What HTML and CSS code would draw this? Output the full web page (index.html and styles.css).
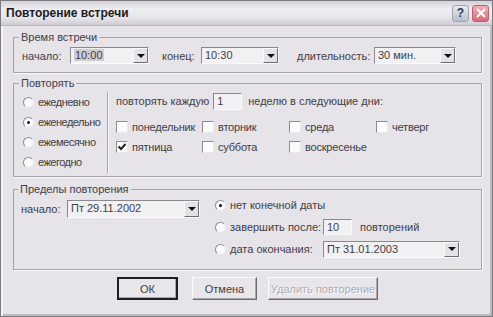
FILE: index.html
```html
<!DOCTYPE html>
<html lang="ru">
<head>
    <meta charset="UTF-8">
    <title>Повторение встречи</title>
    <link rel="stylesheet" href="styles.css">
</head>
<body>
    <div class="window">
        <div class="titlebar">
            <span class="title">Повторение встречи</span>
            <div class="title-buttons">
                <span class="tbtn help">?</span>
                <span class="tbtn close">
                    <svg width="10" height="10" viewBox="0 0 10 10"><path d="M1 1 L9 9 M9 1 L1 9" stroke="#fff" stroke-width="2"/></svg>
                </span>
            </div>
        </div>

        <div class="content">
            <!-- время встречи -->
            <fieldset class="group group-time">
                <legend>Время встречи</legend>
                <span class="lbl lbl-start">начало:</span>
                <div class="combo combo-start"><span class="value"><span class="sel">10:00</span></span><span class="drop"></span></div>
                <span class="lbl lbl-end">конец:</span>
                <div class="combo combo-end"><span class="value">10:30</span><span class="drop"></span></div>
                <span class="lbl lbl-dur">длительность:</span>
                <div class="combo combo-dur"><span class="value">30 мин.</span><span class="drop"></span></div>
            </fieldset>

            <!-- повторять -->
            <fieldset class="group group-repeat">
                <legend>Повторять</legend>
                <div class="kinds">
                    <div class="opt"><span class="radio"></span>ежедневно</div>
                    <div class="opt"><span class="radio on"></span>еженедельно</div>
                    <div class="opt"><span class="radio"></span>ежемесячно</div>
                    <div class="opt"><span class="radio"></span>ежегодно</div>
                </div>
                <div class="weekly">
                    <div class="every">
                        <span>повторять каждую</span>
                        <span class="edit edit-weeks">1</span>
                        <span>неделю в следующие дни:</span>
                    </div>
                    <div class="days">
                        <div class="opt"><span class="check"></span>понедельник</div>
                        <div class="opt"><span class="check"></span>вторник</div>
                        <div class="opt"><span class="check"></span>среда</div>
                        <div class="opt"><span class="check"></span>четверг</div>
                        <div class="opt"><span class="check on"><svg width="10" height="10" viewBox="0 0 10 10"><path d="M1.5 4.5 L4 7 L8.5 2" fill="none" stroke="#222" stroke-width="2"/></svg></span>пятница</div>
                        <div class="opt"><span class="check"></span>суббота</div>
                        <div class="opt"><span class="check"></span>воскресенье</div>
                    </div>
                </div>
            </fieldset>

            <!-- пределы повторения -->
            <fieldset class="group group-range">
                <legend>Пределы повторения</legend>
                <div class="range-start">
                    <span class="lbl lbl-rstart">начало:</span>
                    <div class="combo combo-rstart"><span class="value">Пт 29.11.2002</span><span class="drop"></span></div>
                </div>
                <div class="range-end">
                    <div class="opt"><span class="radio on"></span>нет конечной даты</div>
                    <div class="opt"><span class="radio"></span><span class="end-lbl">завершить после:</span><span class="edit edit-count">10</span><span class="after">повторений</span></div>
                    <div class="opt"><span class="radio"></span><span class="end-lbl">дата окончания:</span><div class="combo combo-rend"><span class="value">Пт 31.01.2003</span><span class="drop"></span></div></div>
                </div>
            </fieldset>

            <div class="buttons">
                <span class="btn btn-ok">ОК</span>
                <span class="btn btn-cancel">Отмена</span>
                <span class="btn btn-remove disabled">Удалить повторение</span>
            </div>
        </div>
    </div>
</body>
</html>
```

FILE: styles.css
```css
* {
    margin: 0;
    padding: 0;
    box-sizing: border-box;
}
body {
    font-family: "Liberation Sans", Arial, sans-serif;
    font-size: 11px;
    color: #3f3e45;
    background: #e6e3e9;
}
.window {
    width: 493px;
    height: 317px;
    background: #e6e3e9;
    border: 1px solid #7c7a80;
    box-shadow: inset 2px 0 0 #f4f3f6, inset -2px -2px 0 #bdbbc1;
}

/* title bar */
.titlebar {
    height: 25px;
    display: flex;
    align-items: center;
    justify-content: space-between;
    padding: 0 3px 0 5px;
    background: linear-gradient(#d3d1d7, #efeef2 35%, #e6e5ea 70%, #cfcdd3);
    border-bottom: 1px solid #b8b6bc;
}
.title {
    font-weight: bold;
    font-size: 12px;
    color: #1c1b24;
}
.title-buttons {
    display: flex;
    gap: 3px;
}
.tbtn {
    width: 17px;
    height: 17px;
    border-radius: 3px;
    display: flex;
    align-items: center;
    justify-content: center;
}
.help {
    background: linear-gradient(#e9ebf0, #b9bec9);
    border: 1px solid #9da2ad;
    color: #2b3550;
    font-weight: bold;
    font-size: 12px;
}
.close {
    background: linear-gradient(#f0b3b9, #d46a76);
    border: 1px solid #b8636c;
}

/* main area */
.content {
    padding: 5px 10px 0 12px;
}
.group {
    border: 1px solid #a6a4aa;
    box-shadow: 1px 1px 0 #fbfbfc;
    padding: 0 8px;
}
.group legend {
    line-height: 13px;
    padding: 0 2px;
    margin-left: -3px;
}
.group-time {
    display: flex;
    align-items: center;
    padding: 3px 8px 8px 8px;
}
.group-repeat {
    display: flex;
    margin-top: 4px;
    padding: 2px 8px 3px 8px;
}
.group-range {
    display: flex;
    margin-top: 6px;
    padding: 0 8px 11px 7px;
}

.lbl-start { width: 48px; }
.lbl-end { width: 39px; margin-left: 13px; }
.lbl-dur { width: 77px; margin-left: 18px; }

/* combo boxes */
.combo {
    height: 17px;
    display: flex;
    background: #f1f0f3;
    border: 1px solid;
    border-color: #8b898f #fbfbfc #fbfbfc #8b898f;
}
.combo .value {
    flex: 1;
    padding-left: 3px;
    line-height: 15px;
    white-space: nowrap;
    overflow: hidden;
}
.combo .sel {
    background: #cfcdd3;
    padding: 0 1px;
}
.drop {
    width: 15px;
    background: #e4e2e7;
    border: 1px solid;
    border-color: #fbfbfc #6e6c72 #6e6c72 #fbfbfc;
    display: flex;
    align-items: center;
    justify-content: center;
}
.drop::after {
    content: "";
    border-left: 4px solid transparent;
    border-right: 4px solid transparent;
    border-top: 4px solid #111;
}
.combo-start { width: 79px; }
.combo-end { width: 78px; }
.combo-dur { width: 82px; }
.combo-rstart { width: 133px; height: 18px; }
.combo-rend { width: 137px; height: 17px; }

/* radios and checkboxes */
.opt {
    display: flex;
    align-items: center;
    white-space: nowrap;
}
.radio {
    width: 11px;
    height: 11px;
    border-radius: 50%;
    background: #fbfbfc;
    border: 1px solid;
    border-color: #8e8c92 #e9e8ec #e9e8ec #8e8c92;
    margin-right: 4px;
    display: flex;
    align-items: center;
    justify-content: center;
}
.radio.on::after {
    content: "";
    width: 3px;
    height: 3px;
    border-radius: 50%;
    background: #111;
}
.check {
    width: 12px;
    height: 12px;
    background: #fbfbfc;
    border: 1px solid;
    border-color: #8e8c92 #e9e8ec #e9e8ec #8e8c92;
    margin-right: 4px;
    display: flex;
    align-items: center;
    justify-content: center;
}

/* repeat section */
.kinds {
    width: 85px;
    padding-left: 1px;
    letter-spacing: -0.5px;
}
.kinds .opt {
    height: 20px;
}
.weekly {
    height: 81px;
    border-left: 1px solid #a6a4aa;
    box-shadow: inset 1px 0 0 #fbfbfc;
    padding-left: 8px;
}
.every {
    display: flex;
    align-items: center;
    height: 18px;
}
.edit {
    height: 17px;
    background: #f1f0f3;
    border: 1px solid;
    border-color: #8b898f #fbfbfc #fbfbfc #8b898f;
    padding-left: 3px;
    line-height: 15px;
}
.edit-weeks {
    width: 29px;
    margin: 0 6px 0 4px;
}
.days {
    display: grid;
    grid-template-columns: 86px 87px 87px auto;
    margin-top: 7px;
    letter-spacing: -0.2px;
}
.days .opt {
    height: 20px;
}

/* range section */
.range-start {
    display: flex;
    align-items: flex-start;
    padding-top: 4px;
    width: 190px;
}
.lbl-rstart {
    width: 46px;
    line-height: 18px;
}
.range-end {
    display: flex;
    flex-direction: column;
    gap: 4px;
    margin-left: 4px;
}
.range-end .opt {
    height: 18px;
}
.end-lbl {
    width: 93px;
}
.edit-count {
    width: 29px;
    height: 16px;
    line-height: 14px;
}
.after {
    margin-left: 8px;
}

/* buttons */
.buttons {
    display: flex;
    margin-top: 7px;
    padding-left: 104px;
}
.btn {
    height: 23px;
    display: flex;
    align-items: center;
    justify-content: center;
    background: #e8e6eb;
    border: 1px solid;
    border-color: #fbfbfc #6e6c72 #6e6c72 #fbfbfc;
    box-shadow: inset -1px -1px 0 #a9a7ad;
}
.btn-ok {
    width: 61px;
    border: 2px solid #1e1d22;
}
.btn-cancel {
    width: 65px;
    margin-left: 14px;
}
.btn-remove {
    width: 110px;
    margin-left: 11px;
}
.disabled {
    color: #aeacb2;
    text-shadow: 1px 1px 0 #fbfbfc;
}
```
